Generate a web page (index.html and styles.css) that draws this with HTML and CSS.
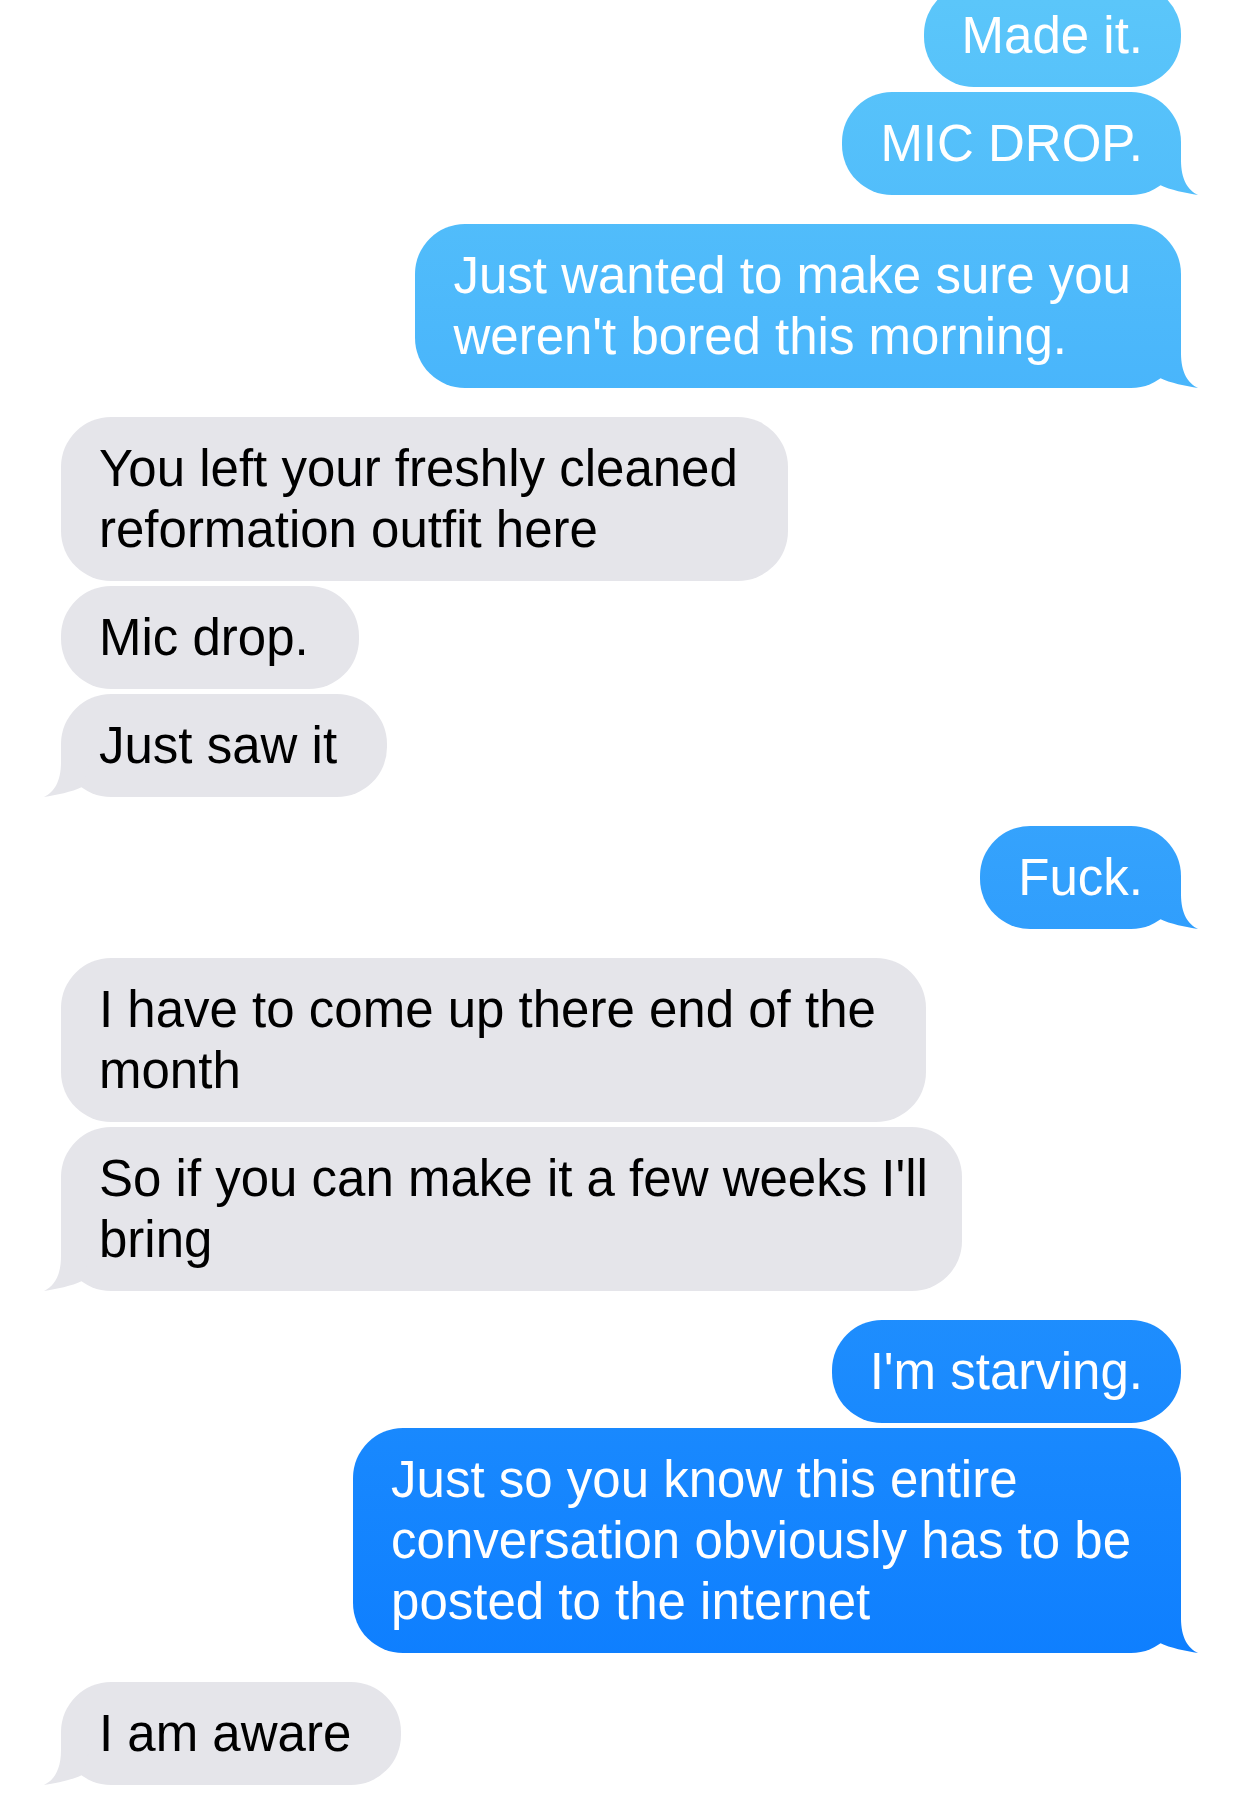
FILE: index.html
```
<!DOCTYPE html>
<html lang="en">
<head>
  <meta charset="UTF-8">
  <title>Messages</title>
  <link rel="stylesheet" href="styles.css">
</head>
<body>
<div class="thread">
  <div class="group out">
    <div class="bubble">Made it.</div>
    <div class="bubble">MIC DROP.</div>
  </div>
  <div class="group out">
    <div class="bubble multi">Just wanted to make sure you<br>weren't bored this morning.</div>
  </div>
  <div class="group in">
    <div class="bubble multi">You left your freshly cleaned<br>reformation outfit here</div>
    <div class="bubble">Mic drop.</div>
    <div class="bubble">Just saw it</div>
  </div>
  <div class="group out">
    <div class="bubble">Fuck.</div>
  </div>
  <div class="group in">
    <div class="bubble multi">I have to come up there end of the<br>month</div>
    <div class="bubble multi">So if you can make it a few weeks I'll<br>bring</div>
  </div>
  <div class="group out">
    <div class="bubble">I'm starving.</div>
    <div class="bubble multi">Just so you know this entire<br>conversation obviously has to be<br>posted to the internet</div>
  </div>
  <div class="group in">
    <div class="bubble">I am aware</div>
  </div>
</div>
</body>
</html>
```
FILE: styles.css
```
:root {
  --gray: #e5e5ea;
  --blue: linear-gradient(to bottom, #5bc6fa 0, #0879ff 1795px) fixed;
}
body {
  margin: 0;
  background: #fff;
  font-family: "Liberation Sans", Arial, sans-serif;
  overflow: hidden;
}
.thread {
  display: flex;
  flex-direction: column;
  gap: 29px;
  padding: 0 61px;
  margin-top: -16px;
}
.group {
  display: flex;
  flex-direction: column;
  gap: 5px;
}
.group.out { align-items: flex-end; }
.group.in { align-items: flex-start; }

.bubble {
  position: relative;
  box-sizing: border-box;
  max-width: 901px;
  padding: 21px 38px;
  border-radius: 50px;
  font-size: 51px;
  line-height: 61px;
  white-space: nowrap;
}
.out .bubble { background: var(--blue); color: #fff; }
.in .bubble { background: var(--gray); color: #000; padding-right: 50px; }
.out .bubble.multi { padding-right: 50px; }

/* tail on the last bubble of each group */
.group .bubble:last-child::after {
  content: "";
  position: absolute;
  bottom: 0;
  width: 50px;
  height: 50px;
}
.out .bubble:last-child::after {
  right: -17px;
  background: var(--blue);
  clip-path: path("M0 0 L33 0 L33 15 C33 35 40 45 50 50 C38 48 22 45 12 40 Z");
}
.in .bubble:last-child::after {
  left: -17px;
  background: var(--gray);
  clip-path: path("M50 0 L17 0 L17 15 C17 35 10 45 0 50 C12 48 28 45 38 40 Z");
}
```
